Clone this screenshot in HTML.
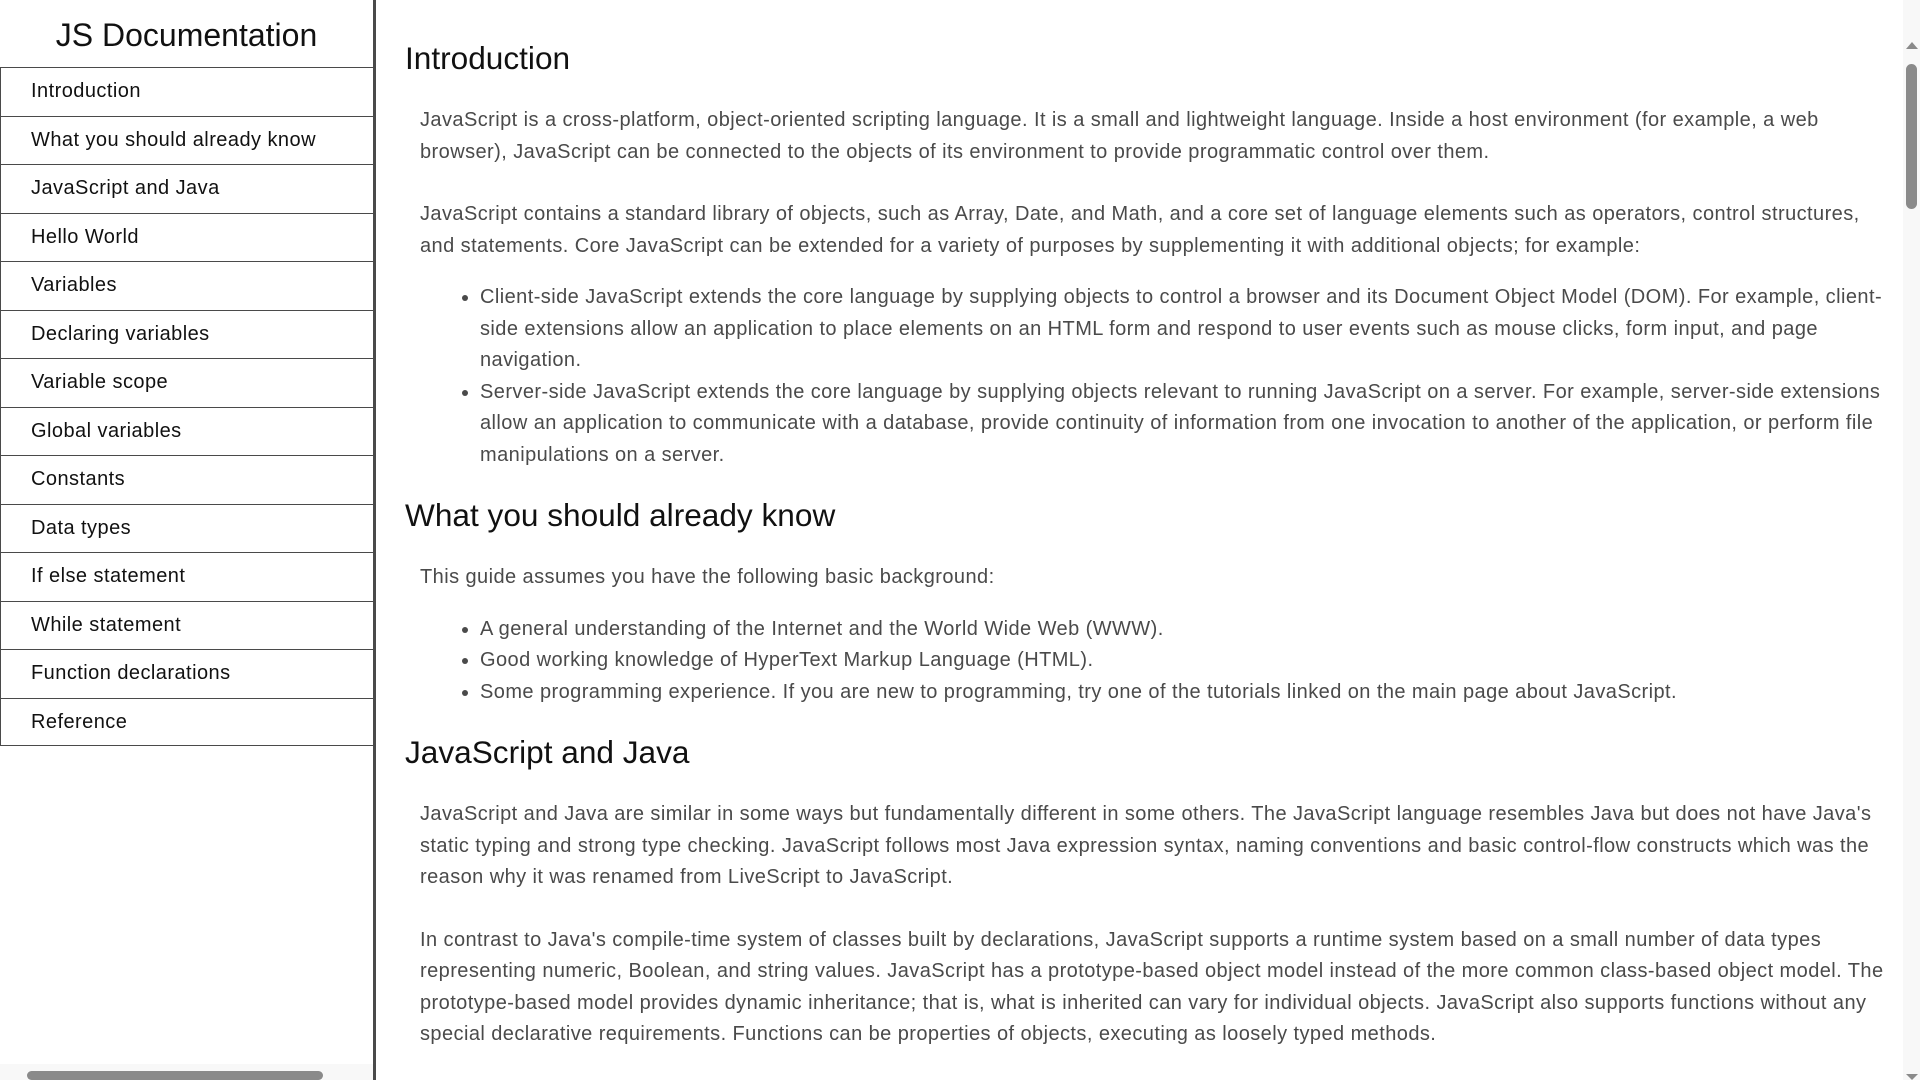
<!DOCTYPE html>
<html><head><meta charset="utf-8"><style>
*{box-sizing:border-box}
html,body{margin:0;width:1920px;height:1080px;overflow:hidden;background:#fff;font-family:"Liberation Sans",Arial,sans-serif}
#nav{position:absolute;left:0;top:0;width:376px;height:1080px;border-right:3px solid #4a4a4a}
#nav h1{margin:0;height:67px;font-size:32px;font-weight:normal;text-align:center;line-height:70px;color:#111}
#nav a{display:block;height:48.5px;line-height:46px;border-top:1.5px solid #4a4a4a;border-left:1.5px solid #4a4a4a;padding-left:30px;font-size:20px;letter-spacing:0.45px;color:#111;text-decoration:none}
#nav a:last-of-type{border-bottom:1.5px solid #4a4a4a}
#hs{position:absolute;left:0;bottom:0;width:373px;height:16px;background:#f8f8f8}
#hs div{position:absolute;left:27px;top:7px;width:296px;height:9px;border-radius:5px;background:#8a8a8a}
#main{position:absolute;left:379px;top:0;width:1524px;height:1080px;overflow:hidden;padding:0 15px 0 26px}
h2{margin:24px 0 25px;font-size:31.6px;font-weight:normal;line-height:40px;color:#111}
h2:first-child{margin-top:38px}
p{margin:31px 0 0 15px;font-size:20px;line-height:31.5px;letter-spacing:0.43px;color:#4a4a4a}
h2+p{margin-top:27px}
ul{margin:20px 0 0 15px;padding-left:60px;font-size:20px;line-height:31.5px;letter-spacing:0.43px;color:#4a4a4a}
#vs{position:absolute;right:0;top:0;width:17px;height:1080px;background:#f8f8f8}
#vs .t{position:absolute;left:3px;top:64px;width:11px;height:145px;border-radius:6px;background:#8a8a8a}
#vs .u{position:absolute;left:3px;top:42px;width:0;height:0;border-left:6px solid transparent;border-right:6px solid transparent;border-bottom:7px solid #8a8a8a}
#vs .d{position:absolute;left:3px;top:1074px;width:0;height:0;border-left:6px solid transparent;border-right:6px solid transparent;border-top:6px solid #8a8a8a}
</style></head><body>
<div id="nav"><h1>JS Documentation</h1>
<a>Introduction</a><a>What you should already know</a><a>JavaScript and Java</a><a>Hello World</a><a>Variables</a><a>Declaring variables</a><a>Variable scope</a><a>Global variables</a><a>Constants</a><a>Data types</a><a>If else statement</a><a>While statement</a><a>Function declarations</a><a>Reference</a>
<div id="hs"><div></div></div></div>
<div id="main">
<h2>Introduction</h2>
<p>JavaScript is a cross-platform, object-oriented scripting language. It is a small and lightweight language. Inside a host environment (for example, a web browser), JavaScript can be connected to the objects of its environment to provide programmatic control over them.</p>
<p>JavaScript contains a standard library of objects, such as Array, Date, and Math, and a core set of language elements such as operators, control structures, and statements. Core JavaScript can be extended for a variety of purposes by supplementing it with additional objects; for example:</p>
<ul><li>Client-side JavaScript extends the core language by supplying objects to control a browser and its Document Object Model (DOM). For example, client-side extensions allow an application to place elements on an HTML form and respond to user events such as mouse clicks, form input, and page navigation.</li>
<li>Server-side JavaScript extends the core language by supplying objects relevant to running JavaScript on a server. For example, server-side extensions allow an application to communicate with a database, provide continuity of information from one invocation to another of the application, or perform file manipulations on a server.</li></ul>
<h2>What you should already know</h2>
<p>This guide assumes you have the following basic background:</p>
<ul><li>A general understanding of the Internet and the World Wide Web (WWW).</li><li>Good working knowledge of HyperText Markup Language (HTML).</li><li>Some programming experience. If you are new to programming, try one of the tutorials linked on the main page about JavaScript.</li></ul>
<h2>JavaScript and Java</h2>
<p>JavaScript and Java are similar in some ways but fundamentally different in some others. The JavaScript language resembles Java but does not have Java's static typing and strong type checking. JavaScript follows most Java expression syntax, naming conventions and basic control-flow constructs which was the reason why it was renamed from LiveScript to JavaScript.</p>
<p>In contrast to Java's compile-time system of classes built by declarations, JavaScript supports a runtime system based on a small number of data types representing numeric, Boolean, and string values. JavaScript has a prototype-based object model instead of the more common class-based object model. The prototype-based model provides dynamic inheritance; that is, what is inherited can vary for individual objects. JavaScript also supports functions without any special declarative requirements. Functions can be properties of objects, executing as loosely typed methods.</p>
</div>
<div id="vs"><div class="u"></div><div class="t"></div><div class="d"></div></div>
</body></html>
